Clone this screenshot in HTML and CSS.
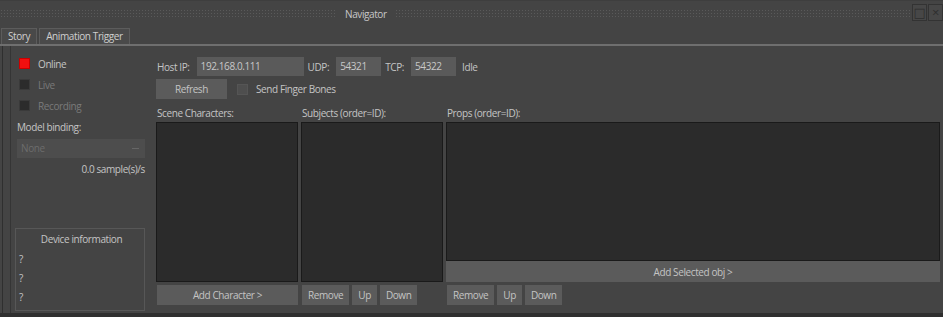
FILE: index.html
```html
<!DOCTYPE html>
<html lang="en">
<head>
    <meta charset="UTF-8">
    <title>Navigator</title>
    <link rel="stylesheet" href="styles.css">
</head>
<body>
    <div class="titlebar">
        <div class="grip left"></div>
        <span class="title">Navigator</span>
        <div class="grip"></div>
        <div class="win-btns">
            <span class="win-btn">&#9633;</span>
            <span class="win-btn">&#215;</span>
        </div>
    </div>

    <div class="tabs">
        <div class="tab">Story</div>
        <div class="tab active">Animation Trigger</div>
    </div>

    <div class="main">
        <div class="gutter"></div>

        <div class="side">
            <div class="check-row"><span class="box on"></span>Online</div>
            <div class="check-row dim"><span class="box"></span>Live</div>
            <div class="check-row dim"><span class="box"></span>Recording</div>
            <div class="label">Model binding:</div>
            <div class="select">None<span class="arrow"></span></div>
            <div class="rate">0.0 sample(s)/s</div>

            <div class="device">
                <div class="device-title">Device information</div>
                <div class="device-line">?</div>
                <div class="device-line">?</div>
                <div class="device-line">?</div>
            </div>
        </div>

        <div class="content">
            <div class="row">
                <span class="lbl">Host IP:</span>
                <span class="field ip">192.168.0.111</span>
                <span class="lbl">UDP:</span>
                <span class="field port">54321</span>
                <span class="lbl">TCP:</span>
                <span class="field port">54322</span>
                <span class="lbl idle">Idle</span>
            </div>
            <div class="row">
                <button class="btn refresh">Refresh</button>
                <span class="box small"></span>
                <span class="lbl">Send Finger Bones</span>
            </div>

            <div class="lists">
                <div class="col">
                    <div class="col-title">Scene Characters:</div>
                    <div class="list"></div>
                    <div class="btn-row">
                        <button class="btn wide">Add Character &gt;</button>
                    </div>
                </div>
                <div class="col">
                    <div class="col-title">Subjects (order=ID):</div>
                    <div class="list"></div>
                    <div class="btn-row">
                        <button class="btn">Remove</button>
                        <button class="btn">Up</button>
                        <button class="btn">Down</button>
                    </div>
                </div>
                <div class="col">
                    <div class="col-title">Props (order=ID):</div>
                    <div class="list"></div>
                    <button class="btn wide add-obj">Add Selected obj &gt;</button>
                    <div class="btn-row">
                        <button class="btn">Remove</button>
                        <button class="btn">Up</button>
                        <button class="btn">Down</button>
                    </div>
                </div>
            </div>
        </div>
    </div>

    <div class="footer"></div>
</body>
</html>
```

FILE: styles.css
```css
body {
    margin: 0;
    width: 943px;
    height: 317px;
    overflow: hidden;
    background-color: #444444;
    color: #c4c4c4;
    font-family: "Open Sans", "DejaVu Sans", sans-serif;
    font-size: 10px;
    letter-spacing: -0.4px;
    display: flex;
    flex-direction: column;
}

button {
    font-family: inherit;
    font-size: inherit;
    letter-spacing: inherit;
    color: inherit;
}

/* title bar */
.titlebar {
    height: 28px;
    display: flex;
    align-items: flex-start;
    background-color: #444444;
    border-top: 1px solid #3e3e3e;
    box-sizing: border-box;
}

.grip {
    flex: 1;
    height: 8px;
    margin-top: 8px;
    background-image: radial-gradient(circle, #5a5a5a 0.8px, transparent 1px);
    background-size: 3px 3px;
}

.grip.left {
    flex: 0 0 337px;
}

.title {
    padding: 6px 8px 0;
    color: #c8c8c8;
}

.win-btns {
    display: flex;
    gap: 1px;
    margin-top: 3px;
}

.win-btn {
    width: 15px;
    height: 17px;
    border: 1px solid #333;
    background-color: #474747;
    color: #2e2e2e;
    font-size: 13px;
    line-height: 15px;
    text-align: center;
    box-sizing: border-box;
}

/* tabs */
.tabs {
    height: 16px;
    display: flex;
    gap: 2px;
    padding-left: 1px;
    align-items: flex-end;
    border-bottom: 2px solid #6f6f6f;
}

.tab {
    height: 15px;
    padding: 0 6px;
    line-height: 15px;
    background-color: #494949;
    border: 1px solid #5c5c5c;
    border-bottom: none;
    color: #cfcfcf;
}

.tab.active {
    background-color: #4a4a4a;
}

/* main area */
.main {
    flex: 1;
    display: flex;
    min-height: 0;
}

.gutter {
    width: 7px;
    margin-left: 2px;
    border-left: 1px solid #2f2f2f;
    border-right: 1px solid #353535;
}

.side {
    width: 128px;
    padding: 7px 7px 2px 6px;
    display: flex;
    flex-direction: column;
}

.check-row {
    display: flex;
    align-items: center;
    height: 21px;
    padding-left: 2px;
}

.check-row.dim {
    color: #7a7a7a;
}

.box {
    width: 11px;
    height: 11px;
    margin-right: 8px;
    background-color: #2b2b2b;
    border: 1px solid #3a3a3a;
    box-sizing: border-box;
    display: inline-block;
}

.box.on {
    background-color: #f21010;
    border-color: #c00;
}

.box.small {
    margin: 0 7px 0 10px;
    background-color: #4e4e4e;
    border-color: #555;
}

.label {
    margin-top: 2px;
    height: 18px;
    line-height: 18px;
}

.select {
    position: relative;
    height: 19px;
    line-height: 19px;
    padding-left: 4px;
    background-color: #4d4d4d;
    color: #6c6c6c;
    margin-top: 3px;
}

.arrow {
    position: absolute;
    right: 6px;
    top: 9px;
    width: 7px;
    height: 1px;
    background-color: #666;
}

.rate {
    text-align: right;
    margin-top: 3px;
    height: 16px;
    line-height: 16px;
}

.device {
    margin: auto 0 0 -2px;
    height: 81px;
    border: 1px solid #575757;
    padding-left: 3px;
}

.device-title {
    text-align: center;
    height: 21px;
    line-height: 21px;
}

.device-line {
    height: 19px;
    line-height: 19px;
}

/* right content */
.content {
    flex: 1;
    padding: 11px 3px 0 4px;
    display: flex;
    flex-direction: column;
}

.row {
    display: flex;
    align-items: center;
    height: 19px;
    margin-bottom: 3px;
}

.row + .row {
    height: 20px;
}

.lbl {
    margin: 0 7px 0 1px;
}

.lbl.idle {
    margin-left: 3px;
}

.field {
    height: 19px;
    line-height: 19px;
    padding-left: 4px;
    background-color: #5a5a5a;
    color: #c8c8c8;
    box-sizing: border-box;
    margin-right: 3px;
}

.field.ip {
    width: 107px;
}

.field.port {
    width: 45px;
}

.btn {
    height: 20px;
    padding: 0 6px;
    border: none;
    background-color: #5b5b5b;
    color: #c4c4c4;
}

.btn.refresh {
    width: 71px;
}

.lists {
    display: grid;
    grid-template-columns: 142px 142px 1fr;
    gap: 3px;
    margin-top: 5px;
}

.col {
    display: flex;
    flex-direction: column;
}

.col-title {
    height: 15px;
    line-height: 13px;
    padding-left: 1px;
}

.list {
    height: 160px;
    background-color: #2b2b2b;
    border: 1px solid #1a1a1a;
    box-sizing: border-box;
}

.col:last-child .list {
    height: 139px;
}

.btn.wide {
    width: 100%;
}

.btn.add-obj {
    height: 21px;
}

.btn-row {
    display: flex;
    gap: 3px;
    margin-top: 3px;
    padding-left: 1px;
}

.footer {
    height: 4px;
    background-color: #2f2f2f;
}
```
